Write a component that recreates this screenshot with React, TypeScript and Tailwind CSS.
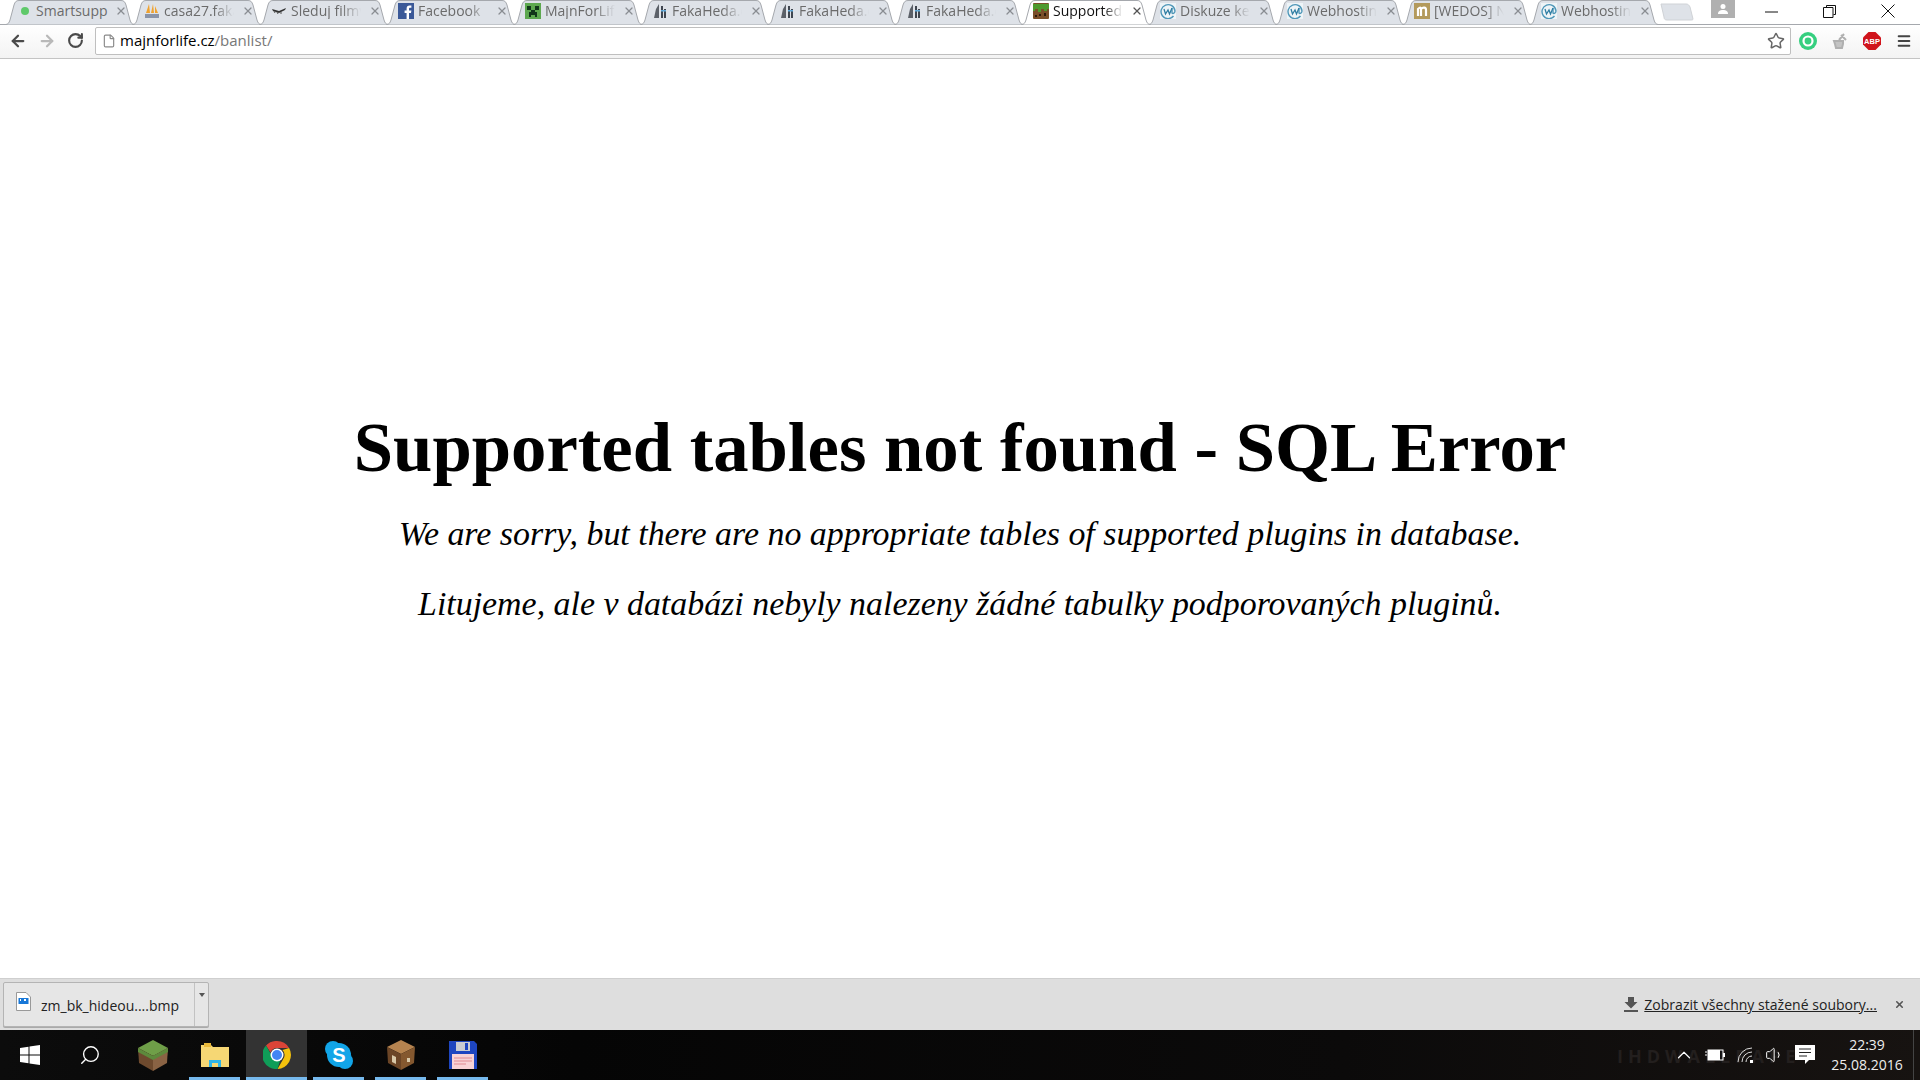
import React from 'react';
import { ArrowLeft, ArrowRight, RotateCw, File, Star, Search, ChevronUp, Volume1, X, Menu } from 'lucide-react';

const UI_FONT = "font-['Open_Sans','Noto_Sans',sans-serif]";

const TABS = [
  { title: 'Smartsupp', icon: 'dot' },
  { title: 'casa27.fakaheda', icon: 'pma' },
  { title: 'Sleduj filmy online', icon: 'film' },
  { title: 'Facebook', icon: 'fb' },
  { title: 'MajnForLife.cz', icon: 'creeper' },
  { title: 'FakaHeda.eu', icon: 'faka' },
  { title: 'FakaHeda.eu', icon: 'faka' },
  { title: 'FakaHeda.eu', icon: 'faka' },
  { title: 'Supported tables', icon: 'grass', active: true },
  { title: 'Diskuze ke', icon: 'wedos' },
  { title: 'Webhosting', icon: 'wedos' },
  { title: '[WEDOS] Nabídka', icon: 'n' },
  { title: 'Webhosting', icon: 'wedos' },
];

function Favicon({ kind }: { kind: string }) {
  if (kind === 'dot') {
    return (
      <svg width="16" height="16" viewBox="0 0 16 16"><circle cx="8" cy="8" r="4" fill="#5fc96a" /></svg>
    );
  }
  if (kind === 'pma') {
    return (
      <svg width="16" height="16" viewBox="0 0 16 16">
        <path d="M2 10 5 1 6 10ZM7 10 9 1 10 10ZM11 10 11 3 14 10Z" fill="#f0a22e" />
        <rect x="1" y="11" width="14" height="4" fill="#8a94a8" />
      </svg>
    );
  }
  if (kind === 'film') {
    return (
      <svg width="16" height="16" viewBox="0 0 16 16">
        <path d="M1 6 8 8 15 5 14 7 8 10 2 8Z" fill="#333" />
        <path d="M3 8 4 10M6 9 7 11M10 9 10 11" stroke="#555" />
      </svg>
    );
  }
  if (kind === 'fb') {
    return (
      <svg width="16" height="16" viewBox="0 0 16 16">
        <rect width="16" height="16" fill="#3b5998" />
        <path d="M11 16V10h2l.4-2.4H11V6c0-.8.3-1.2 1.2-1.2h1.2V2.600h-1.900C9.700 2.600 8.600 3.700 8.600 5.700v1.900H6.600V10h2v6Z" fill="#fff" />
      </svg>
    );
  }
  if (kind === 'creeper') {
    return (
      <svg width="16" height="16" viewBox="0 0 16 16">
        <rect width="16" height="16" fill="#5da84f" />
        <path d="M2 3h4v4H2ZM10 3h4v4h-4ZM6 7h4v2h2v5h-2v-2H6v2H4V9h2Z" fill="#12361a" />
      </svg>
    );
  }
  if (kind === 'faka') {
    return (
      <svg width="16" height="16" viewBox="0 0 16 16">
        <path d="M2 15 4 6 7 1V15Z" fill="#5b6068" />
        <path d="M9 3h2v12H9ZM12 6h2v9h-2Z" fill="#3f4650" />
        <rect x="9" y="7" width="5" height="1.500" fill="#5fa8d8" />
      </svg>
    );
  }
  if (kind === 'grass') {
    return (
      <svg width="16" height="16" viewBox="0 0 16 16">
        <rect width="16" height="16" rx="1" fill="#7a4f28" />
        <path d="M0 1h16v5h-2v2h-3V6H8v3H5V6H2v2H0Z" fill="#4e9a2e" />
        <path d="M6 11h2v2H6ZM11 10h2v3h-2ZM2 12h2v2H2Z" fill="#2d1a0b" />
      </svg>
    );
  }
  if (kind === 'wedos') {
    return (
      <svg width="16" height="16" viewBox="0 0 16 16">
        <rect width="16" height="16" fill="#eef4f7" />
        <path d="M13.500 13A7 7 0 1 1 15 8c0 2-2 3-3 2V5" fill="none" stroke="#4f97b8" strokeWidth="1.400" />
        <path d="M4 6 5.500 11 8 7 9.500 11 12 5" fill="none" stroke="#2f7ea3" strokeWidth="1.300" />
      </svg>
    );
  }
  return (
    <svg width="16" height="16" viewBox="0 0 16 16">
      <rect width="16" height="16" fill="#b39a5c" />
      <path d="M4 13V6c2-2 3-2 3 0v7M7 6c2-2 5-2 5 1v6" fill="none" stroke="#fff" strokeWidth="2.200" />
    </svg>
  );
}

function Tab({ title, icon, active }: { title: string; icon: string; active?: boolean }) {
  return (
    <div className={`relative h-full w-[127px] shrink-0 ${active ? 'z-10' : ''}`}>
      <svg className="absolute left-0 top-0" width="130" height="25" viewBox="0 0 130 25">
        <path
          d="M0.500 24.500C3 24.500 4 23 5 20L9 5C10 2 11 0.500 14 0.500H116C119 0.500 120 2 121 5L125 20C126 23 127 24.500 129.500 24.500"
          fill={active ? '#ffffff' : '#dee2e8'}
          stroke="#a5a8ad"
        />
      </svg>
      <div className={`absolute left-[12px] top-[3px] flex h-[16px] items-center ${icon === 'dot' ? 'w-[96px] gap-[3px]' : 'w-[90px] gap-[4px]'}`}>
        <span className="shrink-0"><Favicon kind={icon} /></span>
        <span
          className={`min-w-0 flex-1 overflow-hidden whitespace-nowrap text-[14px] leading-[16px] ${icon === 'dot' ? '' : '[mask-image:linear-gradient(to_right,black_72%,transparent_100%)]'} ${active ? 'text-[#111]' : 'text-[#6b6b6b]'}`}
        >
          {title}
        </span>
      </div>
      <X className={`absolute left-[110px] top-[5px] ${active ? 'text-[#555]' : 'text-[#8a8d92]'}`} size={12} strokeWidth={2.5} />
    </div>
  );
}

function TabStrip() {
  return (
    <div className="relative flex h-[24px] shrink-0 items-start bg-white pl-[5px]">
      <div className="flex h-full">
        {TABS.map((t, i) => (
          <Tab key={i} title={t.title} icon={t.icon} active={t.active} />
        ))}
      </div>
      <svg className="ml-[4px] mt-[3px] shrink-0" width="34" height="18" viewBox="0 0 34 18">
        <path d="M1 1H26C28 1 29 2 30 4L33 16C33 17 32 17 31 17H7C5 17 4 16 4 14Z" fill="#dee2e8" stroke="#cfd2d6" />
      </svg>
      <div className="ml-[17px] flex h-[18px] w-[24px] shrink-0 items-center justify-center bg-[#b0b0b0]">
        <svg width="12" height="12" viewBox="0 0 12 12">
          <circle cx="6" cy="3.500" r="2.500" fill="#fff" />
          <path d="M1 11c0-3 2-4 5-4s5 1 5 4Z" fill="#fff" />
        </svg>
      </div>
      <div className="ml-auto flex h-[22px] items-center pr-[25px]">
        <svg className="mr-[45px]" width="13" height="13" viewBox="0 0 13 13"><path d="M0 7h13" stroke="#111" /></svg>
        <svg className="mr-[45px]" width="13" height="13" viewBox="0 0 13 13">
          <path d="M3.500 2.500V.5h9v9h-2M.5 2.500h9.500v10H.5Z" fill="none" stroke="#111" />
        </svg>
        <svg width="14" height="14" viewBox="0 0 14 14"><path d="M.5.500 13.500 13.500M13.500.500.500 13.500" stroke="#111" /></svg>
      </div>
    </div>
  );
}

function Toolbar() {
  return (
    <div className="flex h-[35px] shrink-0 items-center border-t border-b border-t-[#a5a8ad] border-b-[#c4c4c4] bg-[linear-gradient(to_bottom,#ffffff,#f3f3f3)] pb-[2px] pl-[9px] pr-[8px]">
      <ArrowLeft className="text-[#4a4a4a]" size={18} strokeWidth={3} />
      <ArrowRight className="ml-[11px] text-[#b9b9b9]" size={18} strokeWidth={3} />
      <RotateCw className="ml-[11px] text-[#4a4a4a]" size={17} strokeWidth={3} />
      <div className="ml-[11px] flex h-[28px] min-w-0 flex-1 items-center rounded-[2px] border border-[#bfbfbf] bg-white pl-[6px] pr-[5px]">
        <File className="text-[#8a8a8a]" size={14} />
        <span className="ml-[4px] text-[15px] text-black">majnforlife.cz</span>
        <span className="text-[15px] text-[#777]">/banlist/</span>
        <Star className="ml-auto text-[#666]" size={18} />
      </div>
      <div className="ml-[8px] flex items-center gap-[14px]">
        <svg width="18" height="18" viewBox="0 0 18 18">
          <circle cx="9" cy="9" r="9" fill="#35cf7f" />
          <circle cx="9" cy="9" r="4.500" fill="none" stroke="#fff" strokeWidth="2.200" />
        </svg>
        <svg width="18" height="18" viewBox="0 0 18 18">
          <path d="M3 9h9v3l-1 4H5l-1-4ZM8 8l5-6M10 3l5 5" fill="#c3c3c3" stroke="#b0b0b0" strokeWidth="2" />
        </svg>
        <svg width="18" height="18" viewBox="0 0 18 18">
          <path d="M5.500 0h7L18 5.500v7L12.500 18h-7L0 12.500v-7Z" fill="#d0141c" />
          <text x="9" y="11.500" textAnchor="middle" fontSize="7.500" fontWeight="700" fill="#fff" fontFamily="Liberation Sans, sans-serif">ABP</text>
        </svg>
        <Menu className="ml-[1px] text-[#444]" size={16} strokeWidth={3} />
      </div>
    </div>
  );
}

function ErrorPage() {
  return (
    <main className="flex min-h-0 flex-1 flex-col items-center bg-white pt-[343px] text-black font-['Liberation_Serif','DejaVu_Serif',serif]">
      <h1 className="text-[70.7px] font-bold leading-[90px]">Supported tables not found - SQL Error</h1>
      <p className="mt-[22px] text-[33.9px] italic leading-[40px]">We are sorry, but there are no appropriate tables of supported plugins in database.</p>
      <p className="mt-[30px] text-[33.9px] italic leading-[40px]">Litujeme, ale v databázi nebyly nalezeny žádné tabulky podporovaných pluginů.</p>
    </main>
  );
}

function DownloadBar() {
  return (
    <div className="flex h-[52px] shrink-0 items-center border-t border-[#cfcfcf] bg-[#dedede] pl-[3px] pr-[15px]">
      <div className="flex h-[45px] w-[206px] items-stretch rounded-[2px] border border-[#b4b4b4] bg-[#e6e6e6] shadow-[0_1px_0_#aaa]">
        <div className="flex flex-1 items-start pl-[12px] pt-[9px]">
          <svg width="15" height="19" viewBox="0 0 15 19">
            <path d="M.5.500H10L14.500 5V18.500H.5Z" fill="#fff" stroke="#999" />
            <rect x="2.500" y="6" width="10" height="6" fill="#1878d8" />
            <path d="M4 7h1v2H4ZM8 7h2v2H8Z" fill="#fff" />
          </svg>
          <span className="ml-[10px] mt-[4px] text-[14px] leading-[20px] text-[#222]">zm_bk_hideou....bmp</span>
        </div>
        <div className="flex w-[14px] justify-center border-l border-[#c2c2c2] pt-[10px]">
          <svg width="6" height="4" viewBox="0 0 6 4"><path d="M0 0h6L3 4Z" fill="#555" /></svg>
        </div>
      </div>
      <svg className="ml-auto" width="14" height="15" viewBox="0 0 14 15">
        <path d="M4 0h6v5h3.500L7 11.500.5 5H4Z" fill="#555" />
        <rect y="13" width="14" height="2" fill="#555" />
      </svg>
      <a className="ml-[6px] text-[14px] tracking-[0.03px] text-[#222] underline">Zobrazit všechny stažené soubory...</a>
      <X className="ml-[17px] text-[#555]" size={11} strokeWidth={3.5} />
    </div>
  );
}

function Underlined({ children, w = 'w-[51px]', active }: { children: React.ReactNode; w?: string; active?: boolean }) {
  return (
    <div className={`relative flex h-full items-center justify-center ${w} ${active ? 'bg-[#333]' : ''}`}>
      {children}
      <span className="absolute bottom-0 left-0 right-0 h-[3px] bg-[#76b9ed]" />
    </div>
  );
}

function Taskbar() {
  return (
    <div className="relative flex h-[50px] shrink-0 items-center bg-[linear-gradient(to_right,#0c0c0c,#050505_30%,#0b0a0a_70%,#171311)] text-white">
      <svg className="ml-[20px]" width="20" height="20" viewBox="0 0 20 20">
        <path d="M0 3 8.500 1.800V9.500H0ZM9.500 1.600 20 0V9.500H9.500ZM0 10.500H8.500V18.200L0 17ZM9.500 10.500H20V20L9.500 18.400Z" fill="#fff" />
      </svg>
      <Search className="ml-[39px] -scale-x-100" size={22} strokeWidth={1.5} />
      <svg className="ml-[37px]" width="30" height="31" viewBox="0 0 30 31">
        <path d="M15 0 30 8 15 16 0 8Z" fill="#6f9f48" />
        <path d="M0 8 15 16V31L1 23Z" fill="#6e4a2e" />
        <path d="M30 8 15 16V31L29 23Z" fill="#8a6344" />
        <path d="M0 8 15 16 30 8V12L15 20 0 12Z" fill="#5d8a3c" />
      </svg>
      <div className="ml-[21px] flex h-full items-stretch">
        <Underlined>
          <svg width="28" height="24" viewBox="0 0 28 24">
            <path d="M0 2h10l2 2h16v20H0Z" fill="#f6d774" />
            <path d="M3 0h7v4H3Z" fill="#e8b83a" />
            <path d="M8 24v-7h12v7h-3v-4h-6v4Z" fill="#2fb4e8" />
          </svg>
        </Underlined>
        <div className="ml-[6px] flex">
          <Underlined w="w-[61px]" active>
            <svg width="28" height="28" viewBox="0 0 28 28">
              <path d="M14 0a14 14 0 0 1 12.100 7H14a7 7 0 0 0-6.500 4.500L3 4.500A14 14 0 0 1 14 0Z" fill="#db4437" />
              <path d="M26.100 7A14 14 0 0 1 14.500 28L20 18.500A7 7 0 0 0 19.500 9Z" fill="#f4c20d" />
              <path d="M3 4.500 9 15a7 7 0 0 0 8.500 3.200L14.500 28A14 14 0 0 1 3 4.500Z" fill="#0f9d58" />
              <circle cx="14" cy="14" r="6.500" fill="#fff" />
              <circle cx="14" cy="14" r="5" fill="#4285f4" />
            </svg>
          </Underlined>
        </div>
        <div className="ml-[6px] flex gap-[11px]">
          <Underlined>
            <svg width="28" height="28" viewBox="0 0 28 28">
              <circle cx="8" cy="8" r="8" fill="#12a5e8" />
              <circle cx="20" cy="20" r="8" fill="#12a5e8" />
              <circle cx="14" cy="14" r="12" fill="#12a5e8" />
              <text x="14" y="21" textAnchor="middle" fontSize="20" fontWeight="700" fill="#fff" fontFamily="Liberation Sans, sans-serif">S</text>
            </svg>
          </Underlined>
          <Underlined>
            <svg width="28" height="30" viewBox="0 0 28 30">
              <path d="M14 0 28 7 14 14 0 7Z" fill="#b5834f" />
              <path d="M0 7 14 14V30L1 23Z" fill="#6b4526" />
              <path d="M28 7 14 14V30L27 23Z" fill="#84582f" />
              <path d="M5 15 9 17V24L5 22ZM20 18h3v4h-3Z" fill="#d8c8a8" />
            </svg>
          </Underlined>
          <Underlined>
            <svg width="28" height="28" viewBox="0 0 28 28">
              <path d="M0 0h25l3 3v25H0Z" fill="#1e46c0" />
              <rect x="7" y="1" width="14" height="9" fill="#c9ccd2" />
              <rect x="16" y="2" width="3" height="7" fill="#1e46c0" />
              <rect x="3" y="13" width="22" height="15" fill="#f8d3d6" />
              <path d="M5 17h18M5 20h18M5 23h12" stroke="#e08b93" />
            </svg>
          </Underlined>
        </div>
      </div>
      <span className="absolute left-[1617px] top-[13px] text-[18px] font-bold tracking-[5px] text-[#231f1e]">IHDWALLPAPE</span>
      <div className="relative ml-auto flex items-center pr-[6px]">
        <ChevronUp size={22} strokeWidth={1.3} />
        <svg className="ml-[10px]" width="20" height="12" viewBox="0 0 20 12">
          <path d="M0 3h2M0 6h2" stroke="#fff" />
          <rect x="3" y="1" width="15" height="10" fill="none" stroke="#fff" />
          <rect x="3" y="1" width="12" height="10" fill="#fff" />
          <rect x="18" y="4" width="2" height="4" fill="#fff" />
        </svg>
        <svg className="ml-[12px]" width="18" height="16" viewBox="0 0 18 16">
          <path d="M1 15A14 14 0 0 1 15 1M5 15A10 10 0 0 1 15 5M9 15A6 6 0 0 1 15 9" fill="none" stroke="#ddd" />
          <rect x="13" y="13" width="3" height="3" fill="#fff" />
        </svg>
        <Volume1 className="ml-[10px]" size={20} strokeWidth={1.2} />
        <svg className="ml-[10px]" width="20" height="20" viewBox="0 0 20 20">
          <path d="M0 0h20v15h-6l-4 4v-4H0Z" fill="#fff" />
          <path d="M4 4h12M4 7.500h12M4 11h8" stroke="#222" />
        </svg>
        <div className="ml-[16px] flex w-[72px] flex-col items-center text-[14px] leading-[20px] text-[#eee]">
          <span>22:39</span>
          <span className="whitespace-nowrap">25.08.2016</span>
        </div>
        <span className="ml-[10px] h-[50px] w-px bg-[#444]" />
      </div>
    </div>
  );
}

export default function App() {
  return (
    <div className={`flex h-screen w-full flex-col overflow-hidden ${UI_FONT}`}>
      <TabStrip />
      <Toolbar />
      <ErrorPage />
      <DownloadBar />
      <Taskbar />
    </div>
  );
}
